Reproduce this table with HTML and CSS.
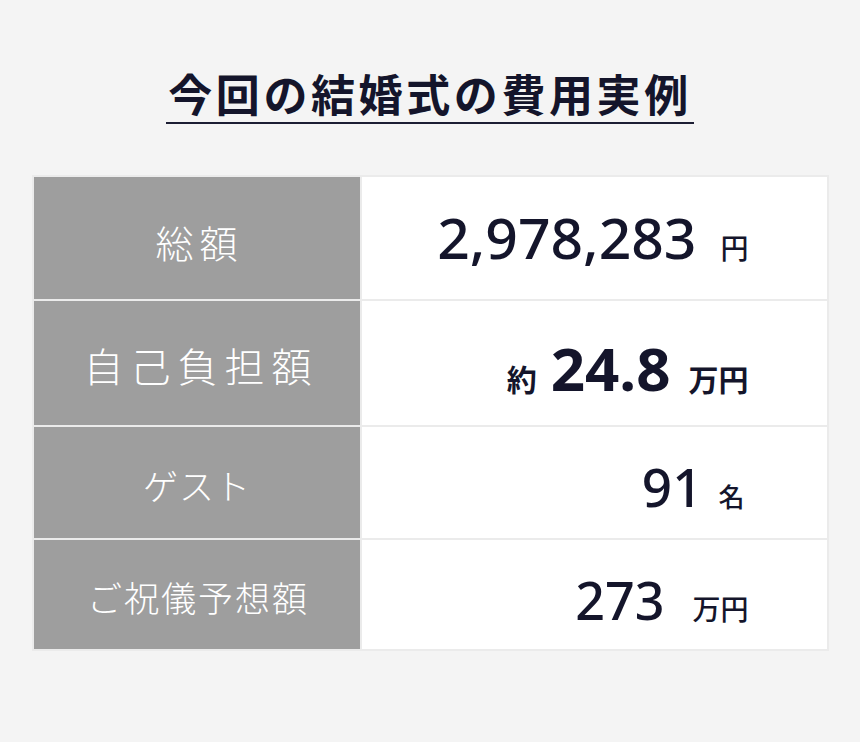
FILE: index.html
```html
<!DOCTYPE html>
<html lang="ja">
<head>
  <meta charset="UTF-8">
  <meta name="viewport" content="width=device-width, initial-scale=1.0">
  <title>今回の結婚式の費用実例</title>
  <link rel="stylesheet" href="styles.css">
</head>
<body>
  <div class="container">
    <h1 class="title">今回の結婚式の費用実例</h1>

    <div class="cost-table">
      <div class="label label-total">総額</div>
      <div class="value value-total">
        <span class="num">2,978,283</span><span class="unit">円</span>
      </div>

      <div class="label label-self">自己負担額</div>
      <div class="value value-self">
        <span class="prefix">約</span><span class="num">24.8</span><span class="unit">万円</span>
      </div>

      <div class="label label-guest">ゲスト</div>
      <div class="value value-guest">
        <span class="num">91</span><span class="unit">名</span>
      </div>

      <div class="label label-gift">ご祝儀予想額</div>
      <div class="value value-gift">
        <span class="num">273</span><span class="unit">万円</span>
      </div>
    </div>
  </div>
</body>
</html>
```

FILE: styles.css
```css
body {
  margin: 0;
  background-color: #f4f4f4;
  font-family: "Noto Sans CJK JP", "Open Sans", sans-serif;
  color: #14152b;
}
.container {
  width: 860px;
  height: 742px;
  padding-top: 66px;
  box-sizing: border-box;
  text-align: center;
}
.title {
  display: inline-block;
  margin: 0;
  padding: 0 2px 2px 2px;
  font-size: 44px;
  font-weight: 700;
  line-height: 54px;
  letter-spacing: 3.6px;
  border-bottom: 2px solid #1c1e33;
}

/* Cost table */
.cost-table {
  display: grid;
  grid-template-columns: 326px 465px;
  grid-template-rows: 122px 124px 111px 109px;
  gap: 2px;
  padding: 2px;
  margin: 51px auto 0;
  width: max-content;
  background: #ebebeb;
}
.label {
  display: flex;
  justify-content: center;
  align-items: center;
  padding-top: 4px;
  background: #9e9e9e;
  color: #ffffff;
  font-weight: 300;
}
.label-total {
  font-size: 38px;
  letter-spacing: 6px;
  padding: 6px 0 0 6px;
}
.label-self {
  font-size: 40px;
  letter-spacing: 7px;
  padding-left: 9px;
}
.label-guest {
  font-size: 35px;
  letter-spacing: 1px;
  padding-left: 1px;
}
.label-gift {
  font-size: 35px;
  letter-spacing: 2px;
  padding-left: 3px;
}

.value {
  display: flex;
  justify-content: flex-end;
  align-items: baseline;
  padding-right: 78px;
  background: #ffffff;
  color: #14152b;
}
.value .num {
  font-family: "Noto Sans", "Open Sans", sans-serif;
  line-height: 1;
}
.value .unit,
.value .prefix {
  font-family: "Noto Sans CJK JP", sans-serif;
  line-height: 1;
}

.value-total {
  padding-top: 32px;
}
.value-total .num {
  font-size: 57px;
  font-weight: 500;
}
.value-total .unit {
  font-size: 28px;
  font-weight: 500;
  margin-left: 24px;
}

.value-self {
  padding-top: 37px;
}
.value-self .prefix {
  font-size: 30px;
  font-weight: 700;
  margin-right: 14px;
}
.value-self .num {
  font-size: 60px;
  font-weight: 700;
}
.value-self .unit {
  font-size: 30px;
  font-weight: 700;
  margin-left: 18px;
}

.value-guest {
  padding-top: 33px;
  padding-right: 82px;
}
.value-guest .num {
  font-size: 53px;
  font-weight: 500;
}
.value-guest .unit {
  font-size: 26px;
  font-weight: 500;
  margin-left: 16px;
}

.value-gift {
  padding-top: 34px;
}
.value-gift .num {
  font-size: 52px;
  font-weight: 500;
}
.value-gift .unit {
  font-size: 28px;
  font-weight: 500;
  margin-left: 28px;
}
```
